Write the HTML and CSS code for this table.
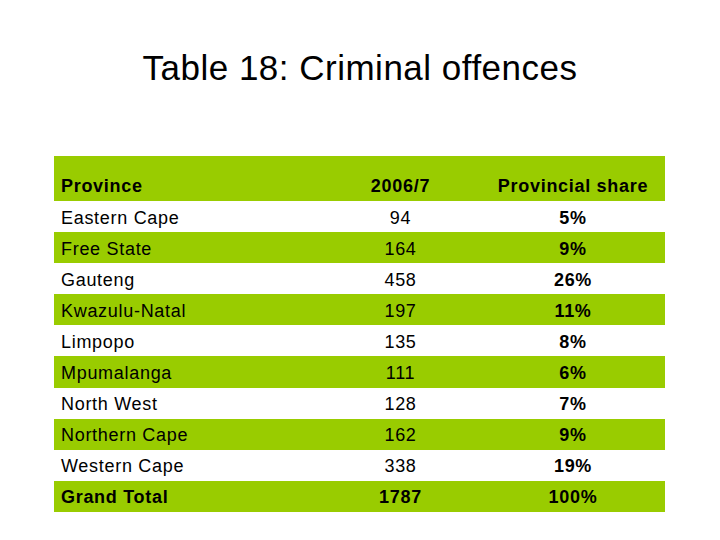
FILE: index.html
```html
<!DOCTYPE html>
<html>
<head>
<meta charset="utf-8">
<link rel="stylesheet" href="styles.css">
</head>
<body>
<h1 class="title">Table 18: Criminal offences</h1>
<div class="table">
  <div class="row head green"><div class="c1">Province</div><div class="c2">2006/7</div><div class="c3">Provincial share</div></div>
  <div class="row"><div class="c1">Eastern Cape</div><div class="c2">94</div><div class="c3">5%</div></div>
  <div class="row green"><div class="c1">Free State</div><div class="c2">164</div><div class="c3">9%</div></div>
  <div class="row"><div class="c1">Gauteng</div><div class="c2">458</div><div class="c3">26%</div></div>
  <div class="row green"><div class="c1">Kwazulu-Natal</div><div class="c2">197</div><div class="c3">11%</div></div>
  <div class="row"><div class="c1">Limpopo</div><div class="c2">135</div><div class="c3">8%</div></div>
  <div class="row green"><div class="c1">Mpumalanga</div><div class="c2">111</div><div class="c3">6%</div></div>
  <div class="row"><div class="c1">North West</div><div class="c2">128</div><div class="c3">7%</div></div>
  <div class="row green"><div class="c1">Northern Cape</div><div class="c2">162</div><div class="c3">9%</div></div>
  <div class="row"><div class="c1">Western Cape</div><div class="c2">338</div><div class="c3">19%</div></div>
  <div class="row green total"><div class="c1">Grand Total</div><div class="c2">1787</div><div class="c3">100%</div></div>
</div>
</body>
</html>
```
FILE: styles.css
```css
html, body {
  margin: 0;
  padding: 0;
  background: #ffffff;
  font-family: "Liberation Sans", Arial, sans-serif;
  color: #000000;
}
.title {
  margin: 48px 0 0 0;
  font-size: 35px;
  font-weight: normal;
  text-align: center;
  letter-spacing: 0.5px;
  line-height: 40px;
  height: 40px;
}
.table {
  margin: 68px 0 0 54px;
  width: 611px;
}
.row {
  display: grid;
  grid-template-columns: 266px 161px 184px;
  height: 31.1px;
  box-sizing: border-box;
  padding-top: 3px;
  align-items: center;
  font-size: 18px;
  letter-spacing: 0.7px;
}
.row.head {
  height: 45px;
  padding-top: 0;
  padding-bottom: 4px;
  align-items: end;
  font-weight: bold;
}
.green {
  background: #99cc00;
}
.c1 {
  padding-left: 7px;
}
.c2 {
  text-align: center;
}
.c3 {
  text-align: center;
  font-weight: bold;
}
.total {
  font-weight: bold;
}
```
